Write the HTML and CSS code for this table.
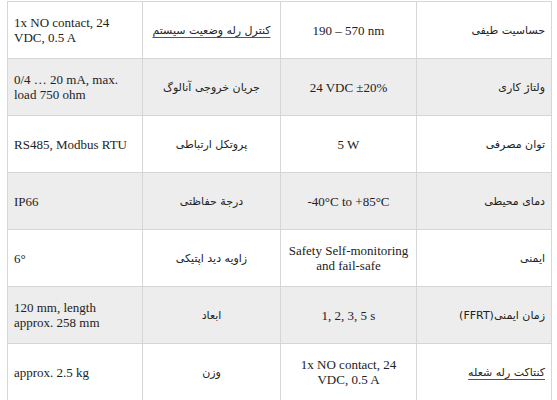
FILE: index.html
```html
<!DOCTYPE html>
<html lang="fa">
<head>
<meta charset="utf-8">
<title>مشخصات فنی</title>
<link rel="stylesheet" href="styles.css">
</head>
<body>
<table class="spec" dir="rtl">
  <colgroup>
    <col class="c-label">
    <col class="c-value">
    <col class="c-label2">
    <col class="c-value2">
  </colgroup>
  <tbody>
    <tr>
      <td class="label">حساسیت طیفی</td>
      <td class="val" dir="ltr">190 – 570 nm</td>
      <td class="label2"><span class="spell">کنترل رله وضعیت سیستم</span></td>
      <td class="val2" dir="ltr">1x NO contact, 24 VDC, 0.5 A</td>
    </tr>
    <tr class="alt">
      <td class="label">ولتاژ کاری</td>
      <td class="val" dir="ltr">24 VDC ±20%</td>
      <td class="label2">جریان خروجی آنالوگ</td>
      <td class="val2" dir="ltr">0/4 … 20 mA, max. load 750 ohm</td>
    </tr>
    <tr>
      <td class="label">توان مصرفی</td>
      <td class="val" dir="ltr">5 W</td>
      <td class="label2">پروتکل ارتباطی</td>
      <td class="val2" dir="ltr">RS485, Modbus RTU</td>
    </tr>
    <tr class="alt">
      <td class="label">دمای محیطی</td>
      <td class="val" dir="ltr">-40°C to +85°C</td>
      <td class="label2">درجة حفاظتی</td>
      <td class="val2" dir="ltr">IP66</td>
    </tr>
    <tr>
      <td class="label">ایمنی</td>
      <td class="val" dir="ltr">Safety Self-monitoring and fail-safe</td>
      <td class="label2">زاویه دید اپتیکی</td>
      <td class="val2" dir="ltr">6°</td>
    </tr>
    <tr class="alt">
      <td class="label">زمان ایمنی(FFRT)</td>
      <td class="val" dir="ltr">1, 2, 3, 5 s</td>
      <td class="label2">ابعاد</td>
      <td class="val2" dir="ltr">120 mm, length approx. 258 mm</td>
    </tr>
    <tr>
      <td class="label"><span class="spell">کنتاکت رله شعله</span></td>
      <td class="val" dir="ltr">1x NO contact, 24 VDC, 0.5 A</td>
      <td class="label2">وزن</td>
      <td class="val2" dir="ltr">approx. 2.5 kg</td>
    </tr>
  </tbody>
</table>
</body>
</html>
```
FILE: styles.css
```css
html, body {
  margin: 0;
  padding: 0;
  background: #ffffff;
}

body {
  padding: 1px 0 0 7px;
}

.spec {
  border-collapse: collapse;
  table-layout: fixed;
  width: 544px;
  color: #222222;
}

.c-label { width: 135px; }
.c-value { width: 136px; }
.c-label2 { width: 138px; }
.c-value2 { width: 135px; }

.spec td {
  border: 1px solid #d6d6d6;
  height: 56px;
  padding: 0 6px;
  vertical-align: middle;
}

.spec tr.alt td {
  background: #ededed;
}

.label,
.label2 {
  font-family: "DejaVu Sans", sans-serif;
  font-size: 11px;
}

.label {
  text-align: right;
  padding-right: 5px;
}

.label2 {
  text-align: center;
}

.val,
.val2 {
  font-family: "Liberation Serif", "Times New Roman", serif;
  font-size: 13px;
  line-height: 15px;
}

.val {
  text-align: center;
}

.val2 {
  text-align: left;
}

.spell {
  text-decoration: underline;
  text-decoration-color: #555555;
  text-underline-offset: 3px;
}
```
